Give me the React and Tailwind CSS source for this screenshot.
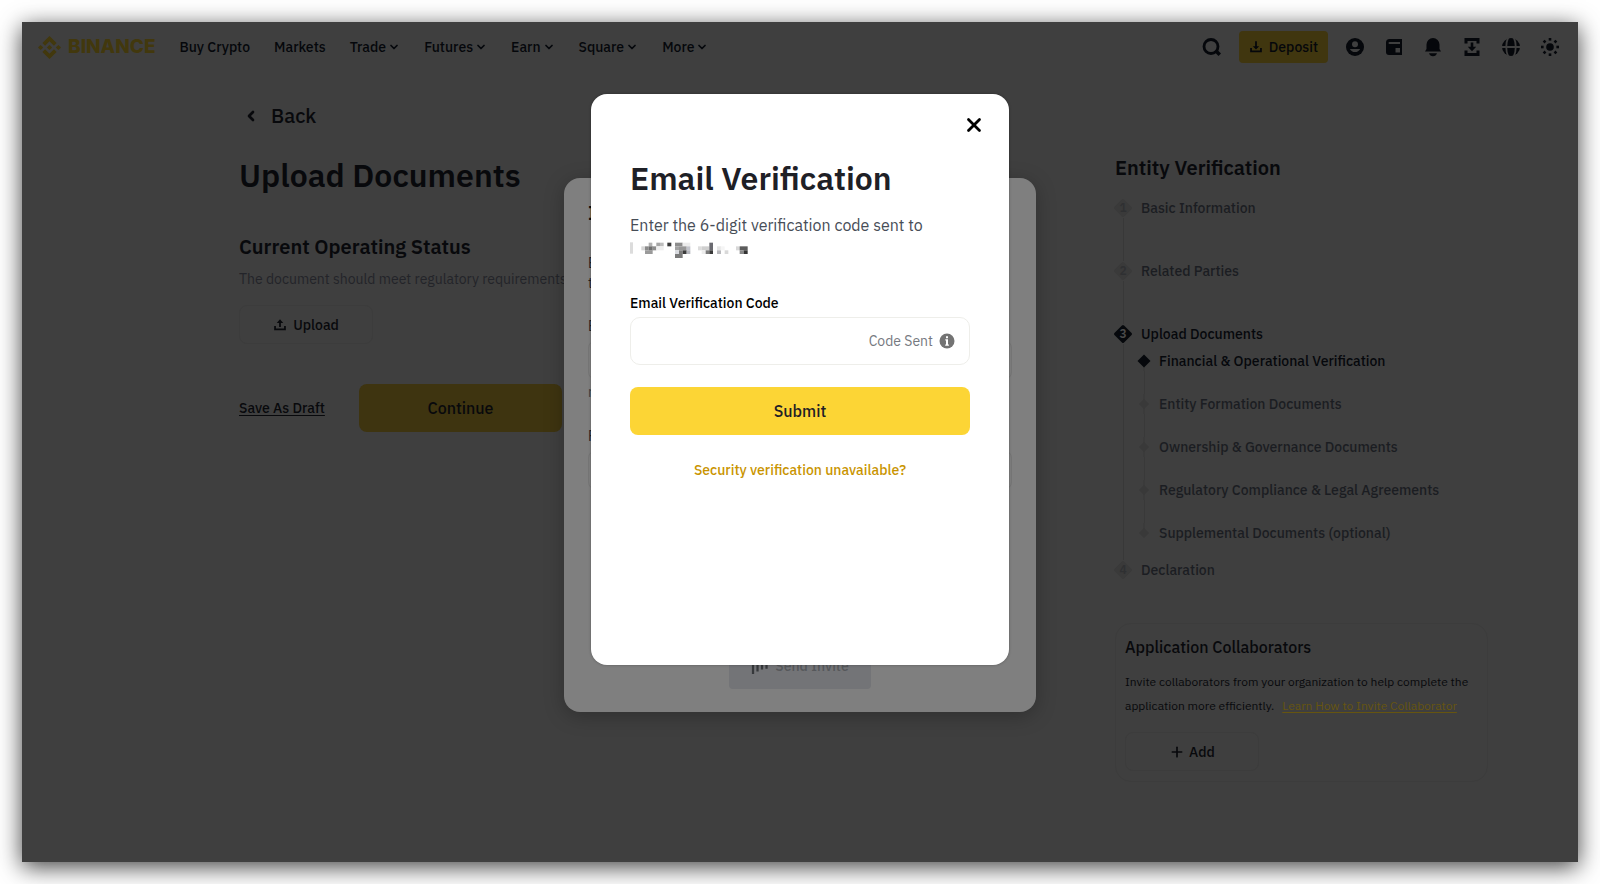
import { FiX, FiPlus, FiChevronDown, FiChevronLeft } from 'react-icons/fi';
import { SiBinance } from 'react-icons/si';

const navItems = [
  { label: 'Buy Crypto' },
  { label: 'Markets' },
  { label: 'Trade', menu: true },
  { label: 'Futures', menu: true },
  { label: 'Earn', menu: true },
  { label: 'Square', menu: true },
  { label: 'More', menu: true },
];

const documentSteps = [
  'Financial & Operational Verification',
  'Entity Formation Documents',
  'Ownership & Governance Documents',
  'Regulatory Compliance & Legal Agreements',
  'Supplemental Documents (optional)',
];

// Blocks of the pixelated e-mail address: x, y, width, height, fill
const mosaic = [
  [18, 16, 9, 34, '#dcdcdc'],
  [52, 28, 11, 12, '#d6d6d6'],
  [63, 28, 11, 12, '#8a8a8a'],
  [63, 40, 23, 11, '#9a9a9a'],
  [74, 17, 11, 11, '#b2b2b2'],
  [74, 28, 12, 12, '#6e6e6e'],
  [85, 28, 12, 12, '#8c8c8c'],
  [97, 17, 11, 11, '#a6a6a6'],
  [108, 17, 11, 11, '#bdbdbd'],
  [97, 28, 22, 12, '#efefef'],
  [130, 17, 12, 11, '#3a3a3a'],
  [153, 17, 23, 11, '#8d8d8d'],
  [176, 17, 23, 11, '#ececec'],
  [153, 28, 12, 12, '#a2a2a2'],
  [165, 28, 23, 12, '#969696'],
  [188, 28, 11, 12, '#c2c4cb'],
  [153, 40, 12, 11, '#d9dbe0'],
  [165, 40, 11, 11, '#7d7d7d'],
  [176, 40, 12, 11, '#3c3c3c'],
  [188, 40, 11, 11, '#b5b7be'],
  [153, 51, 23, 12, '#7a7a7a'],
  [222, 28, 11, 12, '#dddddd'],
  [233, 28, 23, 12, '#cfcfcf'],
  [256, 17, 11, 23, '#6a6a70'],
  [233, 40, 12, 11, '#ededed'],
  [245, 40, 11, 11, '#7c7c7c'],
  [256, 40, 11, 11, '#3a3a3a'],
  [279, 28, 12, 12, '#e6e6e6'],
  [279, 40, 12, 11, '#b9b9bd'],
  [290, 28, 12, 12, '#f5f5f5'],
  [302, 40, 11, 11, '#d9d9d9'],
  [336, 28, 11, 12, '#d8d8d8'],
  [347, 28, 24, 12, '#5c5c5c'],
  [347, 40, 12, 11, '#8a8a8a'],
  [359, 40, 12, 11, '#333333'],
];

const Icon = ({ children, className = 'h-6 w-6' }) => (
  <svg viewBox="0 0 24 24" fill="currentColor" className={className} aria-hidden="true">
    {children}
  </svg>
);

const SearchIcon = () => (
  <Icon>
    <circle cx="11" cy="11.500" r="7" fill="none" stroke="currentColor" strokeWidth="2.800" />
    <path d="M15.500 18l2.500-2.500 3 3-2.500 2.500z" />
  </Icon>
);

const DepositIcon = () => (
  <Icon className="h-3.5 w-3.5">
    <path d="M10.500 2h3v8.600h4L12 16.200l-5.500-5.600h4zM2 13.500h3v4.700h14v-4.700h3V21H2z" />
  </Icon>
);

const UploadIcon = () => (
  <Icon className="h-3.5 w-3.5">
    <path d="M10.500 15.500V8.400h-4L12 2l5.500 6.400h-4v7.100zM2 13.500h3v4.700h14v-4.700h3V21H2z" />
  </Icon>
);

const UserIcon = () => (
  <Icon>
    <circle cx="12" cy="12" r="9" />
    <circle cx="12" cy="9.200" r="3" fill="#3f3f3f" />
    <path fill="#3f3f3f" d="M6.800 14h10.400a5.900 5.900 0 01-10.400 0z" />
  </Icon>
);

const WalletIcon = () => (
  <Icon>
    <path fillRule="evenodd" d="M7.500 4H20v16H7a3 3 0 01-3-3V7.500A3.500 3.500 0 017.500 4zM7.500 7a1 1 0 000 2H18V7zM13.500 13v4.500H18V13z" />
  </Icon>
);

const BellIcon = () => (
  <Icon>
    <path d="M12 3a6.500 6.500 0 016.500 6.500V14l1.500 2.500H4L5.500 14V9.500A6.500 6.500 0 0112 3zM8 18.300h8a4.200 4.200 0 01-8 0z" />
  </Icon>
);

const TransferIcon = () => (
  <Icon>
    <path d="M4.500 3h15v5.500h-3V6h-9v2.500h-3zM4.500 21v-5.500h3V18h9v-2.500h3V21zM10.700 7.500h2.600v4.300h2.900L12 16.200l-4.200-4.400h2.900z" />
  </Icon>
);

const GlobeIcon = () => (
  <Icon>
    <circle cx="12" cy="12" r="9" />
    <path stroke="#3f3f3f" strokeWidth="1.800" fill="none" d="M2 12h20M9.200 2.500C6.600 8 6.600 16 9.200 21.500M14.800 2.500c2.600 5.500 2.600 13.500 0 19" />
  </Icon>
);

const SunIcon = () => (
  <Icon>
    <circle cx="12" cy="12" r="3.800" />
    {[0, 45, 90, 135, 180, 225, 270, 315].map((angle) => (
      <rect key={angle} x="10.700" y="3" width="2.600" height="2.600" transform={`rotate(${angle} 12 12)`} />
    ))}
  </Icon>
);

const headerIcons = [
  ['Account', UserIcon],
  ['Wallet', WalletIcon],
  ['Notifications', BellIcon],
  ['Orders', TransferIcon],
  ['Language', GlobeIcon],
  ['Theme', SunIcon],
];

const Header = () => (
  <header className="flex h-[50px] items-center justify-between px-4 text-[#05070b]">
    <div className="flex items-center gap-6">
      <a href="#home" className="flex items-center gap-[7px] text-[#42380d]">
        <SiBinance className="h-[23px] w-[23px]" />
        <span className="font-[Inter,sans-serif] text-[19px] leading-6 font-extrabold">BINANCE</span>
      </a>
      <nav className="flex items-center gap-6 text-sm font-medium">
        {navItems.map(({ label, menu }) => (
          <a key={label} href="#nav" className="flex items-center gap-0.5">
            {label}
            {menu && <FiChevronDown className="h-3 w-3" strokeWidth={3.5} />}
          </a>
        ))}
      </nav>
    </div>
    <div className="flex items-center gap-[15px]">
      <button type="button" aria-label="Search">
        <SearchIcon />
      </button>
      <button type="button" className="flex h-8 items-center gap-1.5 rounded bg-[#40360f] px-2.5 text-sm font-medium">
        <DepositIcon />
        Deposit
      </button>
      {headerIcons.map(([name, Glyph]) => (
        <button key={name} type="button" aria-label={name}>
          <Glyph />
        </button>
      ))}
    </div>
  </header>
);

const UploadSection = () => (
  <section className="w-[323px] pt-[30px] text-[#08090c]">
    <a href="#back" className="flex items-center gap-3 pl-1 text-xl leading-7 font-medium">
      <FiChevronLeft className="h-4 w-4" strokeWidth={4} />
      Back
    </a>
    <h1 className="mt-[25px] text-[32px] leading-10 font-semibold">Upload Documents</h1>
    <h2 className="mt-[38px] text-xl leading-7 font-semibold">Current Operating Status</h2>
    <p className="mt-2 text-sm whitespace-nowrap text-[#232429]">The document should meet regulatory requirements.</p>
    <button type="button" className="mt-4 flex h-[39px] w-[134px] items-center justify-center gap-1.5 rounded-lg border border-[#3c3c3c] text-sm font-medium">
      <UploadIcon />
      Upload
    </button>
    <div className="mt-10 flex items-center justify-between">
      <a href="#draft" className="text-sm font-medium underline underline-offset-2">
        Save As Draft
      </a>
      <button type="button" className="h-12 w-[203px] rounded-lg bg-[#3e3410] font-medium">
        Continue
      </button>
    </div>
  </section>
);

const StepMarker = ({ number, active, last }) => (
  <div className="flex w-5 flex-col items-center">
    <span className={`relative flex h-5 w-5 items-center justify-center text-xs font-semibold ${active ? 'text-[#4a4a4a]' : 'text-[#2f3032]'}`}>
      <svg viewBox="0 0 20 20" className="absolute inset-0 h-5 w-5" aria-hidden="true">
        <rect x="3.200" y="3.200" width="13.600" height="13.600" rx="1.500" transform="rotate(45 10 10)" fill={active ? '#06080c' : '#3a3a3a'} />
      </svg>
      <span className="relative">{number}</span>
    </span>
    {!last && <span className="w-px flex-1 bg-[#383838]" />}
  </div>
);

const Steps = () => (
  <ol className="mt-4 -ml-0.5 text-sm font-medium text-[#1b1d22]">
    <li className="flex gap-2">
      <StepMarker number={1} />
      <span className="pb-[43px]">Basic Information</span>
    </li>
    <li className="flex gap-2">
      <StepMarker number={2} />
      <span className="pb-[43px]">Related Parties</span>
    </li>
    <li className="flex gap-2">
      <StepMarker number={3} active />
      <div className="pb-[17px]">
        <span className="text-[#06080c]">Upload Documents</span>
        <ol className="mt-[7px] -ml-1">
          {documentSteps.map((step, i) => (
            <li key={step} className="flex gap-2">
              <div className="flex w-3.5 flex-col items-center">
                <svg viewBox="0 0 14 20" className="h-5 w-3.5" aria-hidden="true">
                  {i > 0 && <path d="M7 0v10" stroke="#393939" />}
                  {i < documentSteps.length - 1 && <path d="M7 10v10" stroke="#393939" />}
                  <path d={i === 0 ? 'M7 3.500l6.500 6.500L7 16.500.500 10z' : 'M7 5l5 5-5 5-5-5z'} fill={i === 0 ? '#06080c' : '#393939'} />
                </svg>
                {i < documentSteps.length - 1 && <span className="w-px flex-1 bg-[#393939]" />}
              </div>
              <span className={i === 0 ? 'pb-[23px] text-[#06080c]' : i < documentSteps.length - 1 ? 'pb-[23px]' : ''}>{step}</span>
            </li>
          ))}
        </ol>
      </div>
    </li>
    <li className="flex gap-2">
      <StepMarker number={4} last />
      <span>Declaration</span>
    </li>
  </ol>
);

const Sidebar = () => (
  <aside className="w-[373px] pt-[82px] text-[#08090c]">
    <h2 className="text-xl leading-7 font-semibold">Entity Verification</h2>
    <Steps />
    <div className="mt-[43px] rounded-2xl border border-[#3c3c3c] px-[9px] pt-[11px] pb-2.5">
      <h3 className="leading-6 font-medium">Application Collaborators</h3>
      <p className="mt-[11px] text-xs leading-6">
        Invite collaborators from your organization to help complete the
        <br />
        application more efficiently.
        <a href="#learn" className="ml-2 text-[#665510] underline underline-offset-2">
          Learn How to Invite Collaborator
        </a>
      </p>
      <button type="button" className="mt-3.5 flex h-[39px] w-[134px] items-center justify-center gap-1 rounded-lg border border-[#3c3c3c] text-sm font-medium">
        <FiPlus className="h-4 w-4" strokeWidth={2.5} />
        Add
      </button>
    </div>
  </aside>
);

// Sits behind the e-mail dialog, only its edges show
const InviteDialog = () => (
  <div className="absolute inset-0 flex items-start justify-center pt-[156px]">
    <div className="flex min-h-[534px] w-[472px] flex-col rounded-2xl bg-[#7f7f7f] px-6 pt-[21px] pb-[23px] text-sm text-[#1e2024] shadow-[0_4px_20px_rgba(0,0,0,0.25)]">
      <h2 className="text-xl leading-7 font-semibold text-[#08090c]">I</h2>
      <p className="mt-[26px]">
        E
        <br />
        t
      </p>
      <label htmlFor="invite-email" className="mt-[23px]">
        E
      </label>
      <input id="invite-email" type="email" className="mt-1 h-10 rounded-lg border border-[#767676]" />
      <span className="mt-0.5 text-[#3a3c40]">r</span>
      <label htmlFor="invite-role" className="mt-6">
        F
      </label>
      <input id="invite-role" type="text" className="mt-1 h-10 rounded-lg border border-[#767676]" />
      <button type="button" disabled className="mt-auto flex h-[46px] items-center justify-center gap-1.5 self-center rounded bg-[#737477] px-[22px] font-medium text-[#56585b]">
        <svg viewBox="0 0 20 20" className="h-[18px] w-[18px]" fill="#36383b" aria-hidden="true">
          <path d="M1 1h2.500v18H1zM6 4h2.500v12H6zM11 6h2.500v8H11zM16 7h2.500v6H16z" />
        </svg>
        Send Invite
      </button>
    </div>
  </div>
);

const EmailDialog = () => (
  <div className="absolute inset-0 flex items-start justify-center pt-[72px]">
    <div role="dialog" aria-labelledby="dialog-title" className="flex min-h-[571px] w-[418px] flex-col rounded-2xl bg-white px-[39px] pt-5 text-[#1e2026] shadow-[0_0_3px_rgba(0,0,0,0.3)]">
      <button type="button" aria-label="Close" className="-mr-[15px] self-end text-black">
        <FiX className="h-[22px] w-[22px]" strokeWidth={3} />
      </button>
      <h2 id="dialog-title" className="mt-[22px] text-[32px] leading-10 font-semibold">
        Email Verification
      </h2>
      <p className="mt-[15px] text-[#474d57]">Enter the 6-digit verification code sent to</p>
      <svg viewBox="18 0 372 72" className="h-6 w-[124px]" aria-hidden="true">
        {mosaic.map(([x, y, width, height, fill]) => (
          <rect key={`${x}-${y}`} x={x} y={y} width={width} height={height} fill={fill} />
        ))}
      </svg>
      <label htmlFor="code" className="mt-8 text-sm font-medium text-black">
        Email Verification Code
      </label>
      <div className="mt-1 flex h-12 items-center gap-1.5 rounded-[10px] border border-[#eeeeea] pr-3.5 pl-3">
        <input id="code" type="text" className="min-w-0 flex-1 outline-none" />
        <span className="text-sm text-[#76797f]">Code Sent</span>
        <svg viewBox="0 0 16 16" className="h-4 w-4" aria-hidden="true">
          <circle cx="8" cy="8" r="7.500" fill="#737373" />
          <path fill="#fff" d="M7 3.200h2v2H7zM6.300 6.300H9v5.200h.900v1.300H6.200v-1.300H7V7.600h-.700z" />
        </svg>
      </div>
      <button type="button" className="mt-[22px] h-12 rounded-lg bg-[#fcd535] font-medium">
        Submit
      </button>
      <a href="#help" className="mt-[25px] self-center text-sm font-medium text-[#c99400]">
        Security verification unavailable?
      </a>
    </div>
  </div>
);

export default function App() {
  return (
    <div className="flex min-h-screen flex-col bg-white p-[22px] font-['IBM_Plex_Sans',Roboto,sans-serif]">
      <div className="relative flex-1 bg-[#3f3f3f] shadow-[0_5px_22px_rgba(0,0,0,0.75)]">
        <Header />
        <main className="flex justify-between pr-[90px] pl-[217px]">
          <UploadSection />
          <Sidebar />
        </main>
        <InviteDialog />
        <EmailDialog />
      </div>
    </div>
  );
}
